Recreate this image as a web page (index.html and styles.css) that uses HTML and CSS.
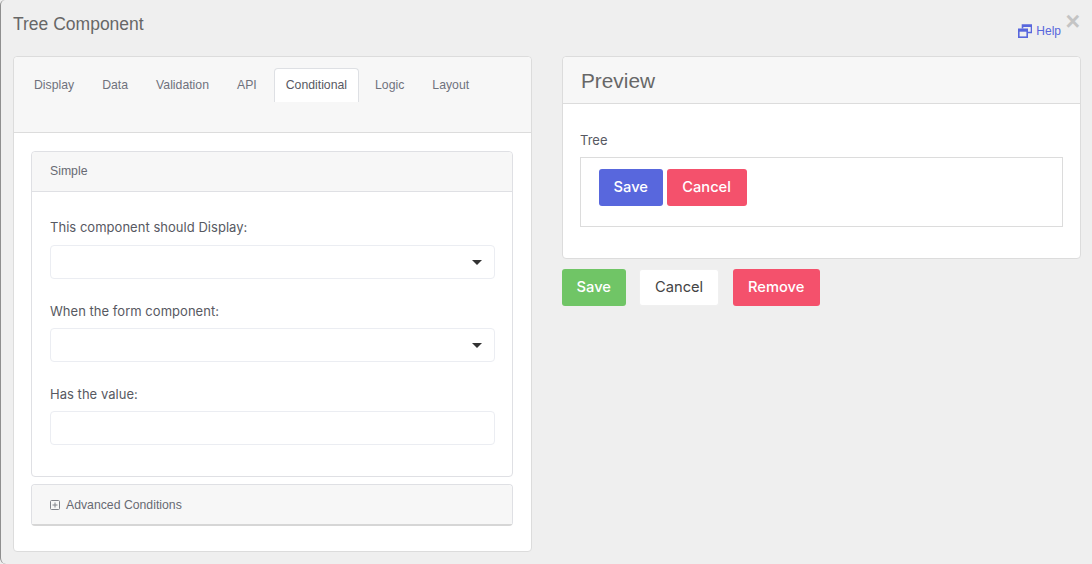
FILE: index.html
```html
<!DOCTYPE html>
<html lang="en">
<head>
<meta charset="utf-8">
<title>Tree Component</title>
<link rel="stylesheet" href="styles.css">
</head>
<body>
<div class="modal">
  <header class="modal-head">
    <h1 class="modal-title">Tree Component</h1>
    <div class="modal-tools">
      <a class="help" href="#">
        <svg class="help-icon" width="14" height="14" viewBox="0 0 14 14" aria-hidden="true">
          <path d="M4.5 4.5V1h9v7.5H9.5" fill="none" stroke="currentColor" stroke-width="1.6"/>
          <rect x="0.8" y="5.3" width="8.4" height="7.9" fill="none" stroke="currentColor" stroke-width="1.6"/>
          <rect x="0.8" y="5.3" width="8.4" height="2.4" fill="currentColor"/>
          <rect x="4.5" y="1" width="9" height="2" fill="currentColor"/>
        </svg>
        <span>Help</span>
      </a>
      <span class="close">×</span>
    </div>
  </header>
  <div class="columns">
    <section class="card editor">
      <nav class="tabs">
        <a class="tab">Display</a>
        <a class="tab">Data</a>
        <a class="tab">Validation</a>
        <a class="tab">API</a>
        <a class="tab active">Conditional</a>
        <a class="tab">Logic</a>
        <a class="tab">Layout</a>
      </nav>
      <div class="editor-body">
        <div class="panel">
          <div class="panel-head">Simple</div>
          <div class="panel-body">
            <div class="field">
              <label class="label">This component should Display:</label>
              <div class="control select"><span class="caret"></span></div>
            </div>
            <div class="field">
              <label class="label">When the form component:</label>
              <div class="control select"><span class="caret"></span></div>
            </div>
            <div class="field">
              <label class="label">Has the value:</label>
              <div class="control"></div>
            </div>
          </div>
        </div>
        <div class="panel collapsed">
          <div class="panel-head">
            <svg class="plus" width="10" height="10" viewBox="0 0 10 10" aria-hidden="true">
              <rect x="0.5" y="0.5" width="9" height="9" rx="1" fill="none" stroke="currentColor"/>
              <path d="M2.5 5h5M5 2.5v5" fill="none" stroke="currentColor"/>
            </svg>
            <span>Advanced Conditions</span>
          </div>
        </div>
      </div>
    </section>
    <div class="side">
      <section class="card preview">
        <h2 class="preview-head">Preview</h2>
        <div class="preview-body">
          <div class="tree-label">Tree</div>
          <div class="tree-box">
            <button class="btn primary">Save</button>
            <button class="btn danger">Cancel</button>
          </div>
        </div>
      </section>
      <div class="actions">
        <button class="btn success">Save</button>
        <button class="btn plain">Cancel</button>
        <button class="btn danger">Remove</button>
      </div>
    </div>
  </div>
</div>
</body>
</html>
```
FILE: styles.css
```css
* { box-sizing: border-box; }
html, body { margin: 0; height: 100%; }
body { overflow: hidden; background: #efefef; font-family: "Liberation Sans", Arial, sans-serif; color: #575962; }
.modal { height: 564px; padding: 0 11px 12px 13px; border-left: 1px solid #8f8f8f; border-radius: 5px 0 0 6px; }
.modal-head { height: 56px; display: flex; justify-content: space-between; position: relative; }
.modal-title { margin: 13px 0 0 -1px; font-size: 17.5px; line-height: 22px; font-weight: 400; color: #676767; }
.modal-tools { display: flex; }
.help { display: flex; align-items: center; gap: 4px; height: 16px; margin-top: 23px; margin-right: 20px; color: #5867dd; font-size: 12px; text-decoration: none; }
.close { position: absolute; right: 1px; top: 8px; font-size: 25px; line-height: 26px; font-weight: 700; color: #c4c4c4; }
.columns { display: flex; gap: 30px; margin-left: -1px; }
.card { background: #fff; border: 1px solid #dcdcdc; border-radius: 4px; }
.editor { width: 519px; height: 496px; display: flex; flex-direction: column; }
.tabs { height: 76px; flex: none; display: flex; gap: 4px; padding: 11px 0 0 8px; background: #f7f7f7; border-bottom: 1px solid #dcdcdc; border-radius: 4px 4px 0 0; align-items: flex-start; }
.tab { height: 34px; padding: 0 11px; font-size: 12.25px; line-height: 33px; color: #6f727d; border: 1px solid transparent; border-bottom: 0; border-radius: 4px 4px 0 0; }
.tab.active { margin: 0 0.5px 0 1px; padding: 0 10.5px 0 11px; background: #fff; border-color: #dee0e4; color: #575962; }
.editor-body { padding: 18px 18px 0 17px; display: flex; flex-direction: column; gap: 7px; }
.panel { border: 1px solid #dfe0e4; border-radius: 4px; background: #fff; }
.panel-head { height: 40px; padding: 0 18px 2px; display: flex; align-items: center; gap: 6px; font-size: 12.25px; color: #676a73; background: #f7f7f7; border-bottom: 1px solid #dfe0e4; border-radius: 4px 4px 0 0; }
.panel-body { height: 284px; padding: 26px 17px 0 18px; display: flex; flex-direction: column; gap: 23px; }
.collapsed { border-bottom: 2px solid #d6d6d6; height: 42px; }
.collapsed .panel-head { border-bottom: 0; height: 39px; padding-bottom: 0; }
.plus { color: #80838a; flex: none; }
.field { display: flex; flex-direction: column; }
.label { font-family: "Inter", "Noto Sans", sans-serif; font-size: 13px; line-height: 18px; letter-spacing: 0.03px; color: #575962; margin-bottom: 8px; }
.field:first-child .label { margin-bottom: 9px; }
.control { height: 34px; border: 1px solid #ebedf2; border-radius: 4px; background: #fff; display: flex; align-items: center; justify-content: flex-end; padding-right: 12px; }
.caret { width: 0; height: 0; border-left: 5px solid transparent; border-right: 5px solid transparent; border-top: 5px solid #333; }
.side { width: 519px; }
.preview { height: 203px; }
.preview-head { margin: 0; height: 47px; padding: 0 18px; background: #f7f7f7; border-bottom: 1px solid #dcdcdc; border-radius: 4px 4px 0 0; font-size: 20.8px; line-height: 48px; font-weight: 400; color: #676767; }
.preview-body { padding: 27px 17px 0 17px; }
.tree-label { font-family: "Inter", "Noto Sans", sans-serif; font-size: 13px; line-height: 18px; color: #575962; margin-bottom: 8px; }
.tree-box { height: 70px; padding: 11px 18px; border: 1px solid #dcdcdc; display: flex; gap: 4px; align-items: flex-start; }
.btn { height: 37px; padding: 0 14.6px 2px; border: 0; border-radius: 3px; font-family: "Inter", "Noto Sans", sans-serif; font-size: 14.7px; font-weight: 500; color: #fff; }
.primary { background: #5867dd; }
.danger { background: #f4516c; min-width: 80px; padding: 0 15.4px 2px; }
.success { background: #70c566; }
.plain { background: #fff; color: #444; font-weight: 400; border: 1px solid #f0f0f0; min-width: 80px; }
.actions { display: flex; gap: 13.5px; margin-top: 10px; align-items: flex-start; }
```
